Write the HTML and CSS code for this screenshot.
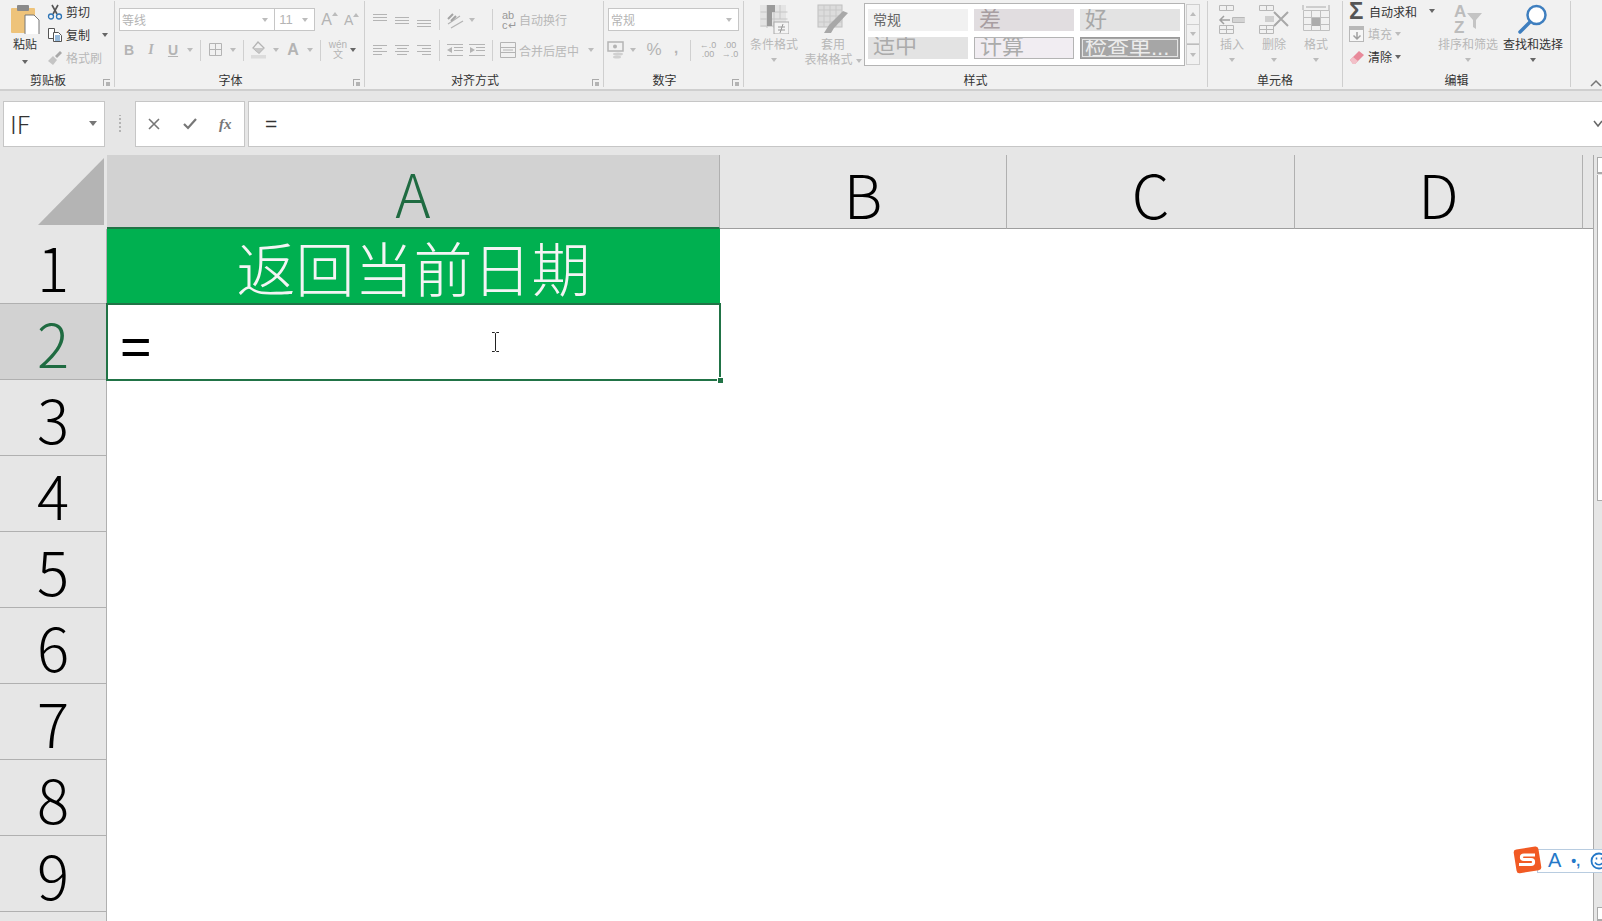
FILE: index.html
```html
<!DOCTYPE html>
<html lang="zh-CN">
<head>
    <meta charset="UTF-8">
    <title>Excel</title>
    <link rel="stylesheet" href="styles.css">
</head>
<body>
<div class="ribbon">
    <!-- clipboard -->
    <div class="group g-clip has-launcher">
        <div class="group-body flex">
            <div class="paste">
                <svg width="30" height="30" viewBox="0 0 30 30"><rect x="1" y="4" width="24" height="25" rx="1" fill="#eec37a"/><rect x="7" y="1" width="12" height="6" rx="1" fill="#8a8a8a"/><path d="M15 11h9l5 5v15H15z" fill="#fff" stroke="#777"/></svg>
                <span class="dark">粘贴</span>
                <i class="caret dk"></i>
            </div>
            <div class="clip-col">
                <div class="clip-row"><svg width="16" height="16" viewBox="0 0 16 16"><path d="M5 1l5 9M11 1L6 10" stroke="#555" stroke-width="1.6"/><circle cx="4" cy="12.5" r="2.5" fill="none" stroke="#2e75b6" stroke-width="1.3"/><circle cx="12" cy="12.5" r="2.5" fill="none" stroke="#2e75b6" stroke-width="1.3"/></svg><span class="dark">剪切</span></div>
                <div class="clip-row"><svg width="16" height="16" viewBox="0 0 16 16"><path d="M1.500 1.500h6v10h-6z" fill="#fff" stroke="#555"/><path d="M6.500 5.500h5l3 3v6h-8z" fill="#fff" stroke="#555"/><path d="M8 9h5M8 11h5M8 13h5" stroke="#2e75b6"/></svg><span class="dark">复制</span><i class="caret dk copy-caret"></i></div>
                <div class="clip-row"><svg width="16" height="16" viewBox="0 0 16 16"><path d="M1 11l5-5 4 4-4 5z" fill="#c4c4c4"/><path d="M8 6l5-5 2 2-5 5z" fill="#a8a8a8"/></svg><span class="off">格式刷</span></div>
            </div>
        </div>
        <div class="group-label">剪贴板</div>
        <i class="launcher"></i>
    </div>

    <!-- font -->
    <div class="group g-font has-launcher">
        <div class="group-body">
            <div class="top-row">
                <div class="select w-font"><span>等线</span><i class="caret"></i></div>
                <div class="select w-size"><span class="num">11</span><i class="caret"></i></div>
                <span class="grow-a big">A<i class="caret up"></i></span>
                <span class="grow-a small">A<i class="caret up"></i></span>
            </div>
            <div class="bottom-row">
                <span class="tool w22 fmt b">B</span>
                <span class="tool w22 fmt it">I</span>
                <span class="tool w22 fmt u">U</span>
                <span class="tool w12"><i class="caret"></i></span>
                <i class="sep"></i>
                <span class="tool w22"><svg width="16" height="16" viewBox="0 0 16 16"><path d="M1.500 1.500h12v12h-12zM7.500 1.500v12M1.500 7.500h12" fill="none" stroke="#b4b4b4"/></svg></span>
                <span class="tool w12"><i class="caret"></i></span>
                <i class="sep"></i>
                <span class="tool w22"><svg width="18" height="18" viewBox="0 0 18 18"><path d="M8 1l6 6-5 5-6-5z" fill="none" stroke="#b4b4b4" stroke-width="1.300"/><path d="M3 7h11l-5 5z" fill="#c8c8c8"/><rect x="1" y="14" width="15" height="3.500" fill="#dcdcdc"/></svg></span>
                <span class="tool w12"><i class="caret"></i></span>
                <span class="tool w22 fmt font-a">A</span>
                <span class="tool w12"><i class="caret"></i></span>
                <i class="sep"></i>
                <span class="tool wen"><small>wén</small><small>文</small></span>
                <span class="tool w12"><i class="caret dk"></i></span>
            </div>
        </div>
        <div class="group-label">字体</div>
        <i class="launcher"></i>
    </div>

    <!-- alignment -->
    <div class="group g-align has-launcher">
        <div class="group-body">
            <div class="top-row">
                <span class="tool w22"><svg width="14" height="14" viewBox="0 0 14 14"><path d="M0 1.500h14M0 4.500h14M0 7.500h14" stroke="#b4b4b4"/></svg></span>
                <span class="tool w22"><svg width="14" height="14" viewBox="0 0 14 14"><path d="M0 4.500h14M0 7.500h14M0 10.500h14" stroke="#b4b4b4"/></svg></span>
                <span class="tool w22"><svg width="14" height="14" viewBox="0 0 14 14"><path d="M0 7.500h14M0 10.500h14M0 13.500h14" stroke="#b4b4b4"/></svg></span>
                <i class="sep"></i>
                <span class="tool w22"><svg width="18" height="18" viewBox="0 0 18 18"><path d="M2 13L14 5M5 17l12-7" stroke="#b4b4b4" stroke-width="1.300"/><path d="M2 8l5-5M5 10l5-5" stroke="#a4a4a4" stroke-width="2"/></svg></span>
                <span class="tool w12"><i class="caret"></i></span>
                <i class="sep sep-wrap"></i>
                <span class="tool wrap-ico">ab<br>c↵</span>
                <span class="off">自动换行</span>
            </div>
            <div class="bottom-row">
                <span class="tool w22"><svg width="14" height="14" viewBox="0 0 14 14"><path d="M0 2.500h14M0 5.500h9M0 8.500h14M0 11.500h9" stroke="#b4b4b4"/></svg></span>
                <span class="tool w22"><svg width="14" height="14" viewBox="0 0 14 14"><path d="M0 2.500h14M2 5.500h10M0 8.500h14M2 11.500h10" stroke="#b4b4b4"/></svg></span>
                <span class="tool w22"><svg width="14" height="14" viewBox="0 0 14 14"><path d="M0 2.500h14M5 5.500h9M0 8.500h14M5 11.500h9" stroke="#b4b4b4"/></svg></span>
                <i class="sep"></i>
                <span class="tool w22"><svg width="16" height="14" viewBox="0 0 16 14"><path d="M0 1.500h16M7 4.500h9M7 7.500h9M0 12.500h16" stroke="#b4b4b4"/><path d="M5 4L0 7l5 3z" fill="#b4b4b4"/></svg></span>
                <span class="tool w22"><svg width="16" height="14" viewBox="0 0 16 14"><path d="M0 1.500h16M7 4.500h9M7 7.500h9M0 12.500h16" stroke="#b4b4b4"/><path d="M1 4l5 3-5 3z" fill="#b4b4b4"/></svg></span>
                <i class="sep sep-merge"></i>
                <span class="tool merge-ico"><svg width="16" height="16" viewBox="0 0 16 16"><path d="M.5.500h15v15H.5zM.5 5.500h15M.5 10.500h15M3 8h10" fill="none" stroke="#b4b4b4"/></svg></span>
                <span class="off nowrap">合并后居中</span>
                <i class="caret merge-caret"></i>
            </div>
        </div>
        <div class="group-label">对齐方式</div>
        <i class="launcher"></i>
    </div>

    <!-- number -->
    <div class="group g-num has-launcher">
        <div class="group-body">
            <div class="top-row">
                <div class="select w-num"><span>常规</span><i class="caret"></i></div>
            </div>
            <div class="bottom-row">
                <span class="tool w22"><svg width="18" height="18" viewBox="0 0 18 18"><rect x="1" y="1" width="15" height="9" fill="none" stroke="#b4b4b4" stroke-width="1.500"/><circle cx="8" cy="5.500" r="2" fill="#b4b4b4"/><ellipse cx="11" cy="13" rx="5" ry="1.500" fill="#d0d0d0"/><ellipse cx="10" cy="16" rx="4" ry="1.500" fill="#d0d0d0"/></svg></span>
                <span class="tool w12"><i class="caret"></i></span>
                <span class="tool pct">%</span>
                <span class="tool comma">,</span>
                <i class="sep sep-num"></i>
                <span class="tool dec">←.0<br>.00</span>
                <span class="tool dec">.00<br>→.0</span>
            </div>
        </div>
        <div class="group-label">数字</div>
        <i class="launcher"></i>
    </div>

    <!-- styles -->
    <div class="group g-style">
        <div class="group-body flex">
            <div class="big-btn w-cond">
                <svg width="30" height="30" viewBox="0 0 30 30"><path d="M1 1h26v22H1z" fill="#e4e4e4"/><path d="M1.500 8h27M1.500 15h27M1.500 22h16M8 1v23M15 1v23M21 1v14" stroke="#c6c6c6"/><path d="M8 1h8v7h-3v14H8z" fill="#9a9a9a"/><rect x="15" y="18" width="15" height="12" fill="#f4f4f4" stroke="#aaa"/><path d="M19 23h7M19 26h7M24 20l-3 9" stroke="#999"/></svg>
                <span class="off">条件格式</span>
                <i class="caret"></i>
            </div>
            <div class="big-btn w-table">
                <svg width="32" height="30" viewBox="0 0 32 30"><rect x="1" y="1" width="24" height="22" fill="#dcdcdc" stroke="#c0c0c0"/><path d="M1 6h24M1 12h24M1 18h24M7 1v22M13 1v22M19 1v22" stroke="#c8c8c8"/><path d="M31 9L17 24l-3 5h-7l5-8 14-14z" fill="#a8a8a8"/></svg>
                <span class="off">套用</span>
                <span class="off tbl-line">表格格式<i class="caret"></i></span>
            </div>
            <div class="gallery">
                <div class="style-cells">
                    <div class="style-cell s-normal">常规</div>
                    <div class="style-cell s-bad">差</div>
                    <div class="style-cell s-good">好</div>
                    <div class="style-cell s-mid">适中</div>
                    <div class="style-cell s-calc">计算</div>
                    <div class="style-cell s-check">检查单...</div>
                </div>
            </div>
            <div class="gal-scroll">
                <span><i class="caret up"></i></span>
                <span><i class="caret"></i></span>
                <span class="gal-more"><i class="caret"></i></span>
            </div>
        </div>
        <div class="group-label">样式</div>
    </div>

    <!-- cells -->
    <div class="group g-cells">
        <div class="group-body flex">
            <div class="big-btn w-cell">
                <svg width="28" height="30" viewBox="0 0 28 30"><path d="M1.500 1.500h14v5h-14zM8.500 1.500v5M14.500 13.500h12v5h-12zM20.500 13.500v5M1.500 21.500h14v8h-14zM8.500 21.500v8M1.500 25.500h14" fill="none" stroke="#b8b8b8"/><rect x="15" y="14" width="12" height="4" fill="#d4d4d4"/><path d="M12 16H2M6 12l-4 4 4 4" fill="none" stroke="#a0a0a0" stroke-width="1.500"/></svg>
                <span class="off">插入</span>
                <i class="caret"></i>
            </div>
            <div class="big-btn w-cell">
                <svg width="32" height="30" viewBox="0 0 32 30"><path d="M1.500 1.500h14v5h-14zM8.500 1.500v5M1.500 21.500h14v8h-14zM8.500 21.500v8M1.500 25.500h14" fill="none" stroke="#b8b8b8"/><rect x="7" y="12" width="9" height="6" fill="#cfcfcf"/><path d="M16 8l14 14M30 8L16 22" stroke="#a8a8a8" stroke-width="2"/></svg>
                <span class="off">删除</span>
                <i class="caret"></i>
            </div>
            <div class="big-btn w-cell">
                <svg width="28" height="30" viewBox="0 0 28 30"><path d="M1.500 6.500h26v20h-26zM1.500 13.500h26M1.500 20.500h26M9.500 6.500v20M18.500 6.500v20" fill="none" stroke="#c0c0c0"/><rect x="10" y="14" width="8" height="8" fill="#acacac"/><path d="M1 1v5M27 1v5M4 3h20" stroke="#aaa"/></svg>
                <span class="off">格式</span>
                <i class="caret"></i>
            </div>
        </div>
        <div class="group-label">单元格</div>
    </div>

    <!-- editing -->
    <div class="group g-edit">
        <div class="group-body flex">
            <div class="edit-col">
                <div class="clip-row"><span class="sigma">Σ</span><span class="dark">自动求和</span><i class="caret dk sum-caret"></i></div>
                <div class="clip-row"><svg width="16" height="16" viewBox="0 0 16 16"><rect x=".5" y=".5" width="14" height="15" fill="#f6f6f6" stroke="#b8b8b8"/><rect x="1" y="1" width="13" height="3" fill="#b8b8b8"/><path d="M8 6v7M4.500 9.500L8 13l3.500-3.500" fill="none" stroke="#a0a0a0" stroke-width="1.500"/></svg><span class="off">填充</span><i class="caret"></i></div>
                <div class="clip-row"><svg width="16" height="16" viewBox="0 0 16 16"><path d="M1 11l9-9 5 4-9 9H4z" fill="#e88a9a"/><path d="M1 11l3-3 5 4-3 3H4z" fill="#f2c0c8"/></svg><span class="dark">清除</span><i class="caret dk"></i></div>
            </div>
            <div class="big-btn w-sort">
                <svg width="32" height="30" viewBox="0 0 32 30"><text x="2" y="13" class="az">A</text><text x="2" y="29" class="az">Z</text><path d="M15 9h15l-6 7v9l-3-2v-7z" fill="#c4c4c4"/></svg>
                <span class="off">排序和筛选</span>
                <i class="caret"></i>
            </div>
            <div class="big-btn w-find">
                <svg width="30" height="30" viewBox="0 0 30 30"><circle cx="18.500" cy="11" r="9" fill="#fff" stroke="#3f7fbf" stroke-width="2.500"/><path d="M12 18L2 28" stroke="#3f7fbf" stroke-width="3.500" stroke-linecap="round"/></svg>
                <span class="dark">查找和选择</span>
                <i class="caret dk"></i>
            </div>
        </div>
        <div class="group-label">编辑</div>
    </div>
    <svg class="collapse" width="12" height="8" viewBox="0 0 12 8"><path d="M1 7l5-5 5 5" fill="none" stroke="#777" stroke-width="1.500"/></svg>
</div>

<div class="formula-bar">
    <div class="name-box"><span>IF</span><i class="caret dk"></i></div>
    <div class="grip"></div>
    <div class="fx-buttons">
        <svg width="14" height="14" viewBox="0 0 14 14"><path d="M2 2l10 10M12 2L2 12" stroke="#777" stroke-width="1.600"/></svg>
        <svg width="16" height="14" viewBox="0 0 16 14"><path d="M2 7l4 4 8-9" fill="none" stroke="#777" stroke-width="2.200"/></svg>
        <span class="fx">fx</span>
    </div>
    <div class="formula-input"><span>=</span><svg class="fb-expand" width="10" height="8" viewBox="0 0 10 8"><path d="M1 1l4 5 4-5" fill="none" stroke="#666" stroke-width="1.500"/></svg></div>
</div>

<div class="sheet">
    <div class="grid">
        <div class="corner"><div class="tri"></div></div>
        <div class="col-head selected">A</div>
        <div class="col-head">B</div>
        <div class="col-head">C</div>
        <div class="col-head last">D</div>
        <div class="col-rest"></div>

        <div class="row-head">1</div>
        <div class="cell title-cell">返回当前日期</div>
        <div class="row-head selected">2</div>
        <div class="cell active-cell"><span class="eq">=</span>
            <svg class="ibeam" width="9" height="20" viewBox="0 0 9 20"><path d="M1 .5h2.500l1 1 1-1H8M4.500 1.500v17M1 19.500h2.500l1-1 1 1H8" fill="none" stroke="#222"/></svg>
            <i class="handle"></i>
        </div>
        <div class="row-head">3</div><div class="cell"></div>
        <div class="row-head">4</div><div class="cell"></div>
        <div class="row-head">5</div><div class="cell"></div>
        <div class="row-head">6</div><div class="cell"></div>
        <div class="row-head">7</div><div class="cell"></div>
        <div class="row-head">8</div><div class="cell"></div>
        <div class="row-head">9</div><div class="cell"></div>
        <div class="row-head">10</div><div class="cell"></div>
    </div>
    <div class="vscroll">
        <div class="arrow"></div>
        <div class="thumb"></div>
        <div class="arrow down"></div>
    </div>
</div>

<div class="ime">
    <svg class="ime-logo" width="30" height="29" viewBox="0 0 30 29"><rect x="2" y="2" width="25" height="24" rx="3" fill="#f15a24" transform="rotate(-9 14 14)"/><path d="M22 9H11c-3.500 0-3.500 4.500 0 4.500h7c3.500 0 3.500 5 0 5H6" fill="none" stroke="#fff" stroke-width="3"/></svg>
    <div class="ime-bar">
        <span class="ime-a">A</span>
        <span class="ime-dots">•,</span>
        <svg width="18" height="18" viewBox="0 0 18 18"><circle cx="9" cy="9" r="7.500" fill="none" stroke="#2478c8" stroke-width="1.800"/><path d="M5 10.500c2 3 6 3 8 0" fill="none" stroke="#2478c8" stroke-width="1.500"/><path d="M6.500 5.500v2M11.500 5.500v2" stroke="#2478c8" stroke-width="1.500"/></svg>
    </div>
</div>
</body>
</html>
```

FILE: styles.css
```css
* {
    margin: 0;
    padding: 0;
    box-sizing: border-box;
}
html, body {
    width: 1602px;
    height: 921px;
    overflow: hidden;
}
body {
    position: relative;
    background: #e6e6e6;
    font-family: "Liberation Sans", "Noto Sans CJK SC", sans-serif;
    font-size: 12px;
    color: #444;
    display: flex;
    flex-direction: column;
}
.flex {
    display: flex;
}
.dark {
    color: #333;
}
.off {
    color: #b8b8b8;
}
.nowrap {
    white-space: nowrap;
}
svg {
    display: block;
    flex-shrink: 0;
}

/* little triangles */
.caret {
    display: inline-block;
    width: 0;
    height: 0;
    border-left: 3.5px solid transparent;
    border-right: 3.5px solid transparent;
    border-top: 4px solid #bcbcbc;
    flex-shrink: 0;
}
.caret.dk {
    border-top-color: #666;
}
.caret.up {
    border-top: 0;
    border-bottom: 4px solid #bcbcbc;
}

/* ribbon */
.ribbon {
    position: relative;
    display: flex;
    height: 91px;
    flex-shrink: 0;
    background: #f1f1f1;
    border-bottom: 2px solid #cfcfcf;
}
.group {
    position: relative;
    display: flex;
    flex-direction: column;
    height: 86px;
    margin-top: 1px;
    border-right: 1px solid #cfcfcf;
}
.group-body {
    flex: 1;
    min-height: 0;
}
.group-label {
    height: 16px;
    line-height: 21px;
    text-align: center;
    color: #333;
}
.has-launcher .group-label {
    padding-right: 18px;
}
.launcher {
    position: absolute;
    right: 4px;
    bottom: 1px;
    width: 7px;
    height: 7px;
    border-left: 1px solid #aaa;
    border-top: 1px solid #aaa;
}
.launcher::after {
    content: "";
    position: absolute;
    right: 0;
    bottom: 0;
    width: 4px;
    height: 4px;
    background: #b4b4b4;
}
.g-clip { width: 115px; }
.g-font { width: 250px; }
.g-align { width: 239px; }
.g-num { width: 140px; }
.g-style { width: 464px; }
.g-cells { width: 135px; }
.g-edit { width: 228px; }

.paste {
    width: 30px;
    margin: 3px 0 0 10px;
    display: flex;
    flex-direction: column;
    align-items: center;
}
.paste span {
    margin-top: 2px;
    line-height: 18px;
}
.paste .caret {
    margin-top: 6px;
}
.clip-col {
    margin-left: 7px;
    margin-top: -1px;
    width: 66px;
}
.clip-row {
    display: flex;
    align-items: center;
    height: 23px;
    gap: 3px;
    white-space: nowrap;
}
.copy-caret {
    margin-left: 9px;
}

.top-row, .bottom-row {
    display: flex;
    align-items: center;
}
.top-row {
    height: 23px;
    margin-top: 7px;
}
.bottom-row {
    height: 22px;
    margin-top: 8px;
}
.g-font .top-row { padding-left: 4px; }
.g-font .bottom-row { padding-left: 3px; }
.g-align .top-row, .g-align .bottom-row { margin-left: 4px; }
.g-num .top-row { padding-left: 4px; }
.g-num .bottom-row { padding-left: 1px; }

.select {
    display: flex;
    align-items: center;
    justify-content: space-between;
    height: 23px;
    padding: 0 6px 0 2px;
    background: #fff;
    border: 1px solid #c6c6c6;
    color: #b4b4b4;
}
.w-font { width: 157px; }
.w-size { width: 40px; border-left: 0; padding-left: 4px; }
.w-num { width: 131px; }
.num {
    font-size: 13px;
}
.grow-a {
    display: flex;
    color: #b4b4b4;
    font-size: 16px;
    width: 20px;
}
.grow-a.big { margin-left: 6px; }
.grow-a.small { margin-left: 3px; font-size: 14px; }
.grow-a .caret { margin-top: 1px; border-left-width: 3px; border-right-width: 3px; }

.tool {
    display: flex;
    align-items: center;
    justify-content: center;
    flex-shrink: 0;
    color: #b4b4b4;
}
.w22 { width: 22px; }
.w12 { width: 12px; }
.fmt {
    font-size: 14px;
}
.b { font-weight: bold; }
.it { font-style: italic; font-family: "Liberation Serif", serif; font-weight: bold; }
.u { text-decoration: underline; font-weight: bold; }
.font-a { font-size: 16px; font-weight: bold; }
.sep {
    width: 1px;
    height: 21px;
    margin: 0 4px;
    background: #d0d0d0;
    flex-shrink: 0;
}
.sep-wrap { margin-left: 14px; margin-right: 9px; }
.sep-merge { margin-left: 4px; margin-right: 7px; }
.wen {
    width: 26px;
    margin-right: -4px;
    flex-direction: column;
    line-height: 10px;
}
.wen small {
    font-size: 10px;
}
.wrap-ico {
    width: 15px;
    display: block;
    font-size: 11px;
    line-height: 10px;
    margin-right: 2px;
    color: #999;
}
.merge-ico {
    width: 16px;
    margin-right: 3px;
}
.merge-caret {
    margin-left: 9px;
}
.pct {
    width: 26px;
    margin-left: 2px;
    font-size: 17px;
}
.comma {
    width: 18px;
    font-size: 15px;
    font-weight: bold;
    padding-bottom: 6px;
}
.sep-num { margin-left: 5px; margin-right: 6px; }
.dec {
    display: block;
    width: 22px;
    font-size: 9px;
    line-height: 9px;
    text-align: center;
    color: #aaa;
}

.big-btn {
    display: flex;
    flex-direction: column;
    align-items: center;
    flex-shrink: 0;
    padding-top: 3px;
    white-space: nowrap;
}
.big-btn span {
    line-height: 15px;
}
.big-btn > svg {
    margin-bottom: 4px;
}
.big-btn > .caret {
    margin-top: 5px;
}
.w-cond { width: 56px; margin-left: 2px; }
.w-table { width: 62px; }
.tbl-line .caret { margin-left: 3px; vertical-align: middle; }
.gallery {
    width: 321px;
    height: 63px;
    margin-top: 2px;
    padding: 5px 3px 0 3px;
    background: #fff;
    border: 1px solid #b4b4b4;
}
.style-cells {
    display: grid;
    grid-template-columns: repeat(3, 100px);
    grid-auto-rows: 22px;
    column-gap: 6px;
    row-gap: 6px;
}
.style-cell {
    overflow: hidden;
    line-height: 22px;
    font-size: 22px;
    padding-left: 5px;
    white-space: nowrap;
    color: #ababab;
}
.s-normal { background: #f1f1f1; font-size: 14px; color: #666; }
.s-bad { background: #e1dde0; color: #a89ea2; }
.s-good { background: #e3e3e3; color: #a8a8a8; }
.s-mid { background: #e3e3e3; line-height: 18px; }
.s-calc { background: #f1edf2; border: 1px solid #b4b4b4; line-height: 18px; }
.s-check {
    background: #a6a6a6;
    border: 3px double #e4e4e4;
    outline: 1px solid #9a9a9a;
    outline-offset: -1px;
    padding-left: 2px;
    color: #ececec;
    line-height: 15px;
}
.gal-scroll {
    display: flex;
    flex-direction: column;
    width: 14px;
    height: 61px;
    margin: 3px 0 0 1px;
    border: 1px solid #cfcfcf;
}
.gal-scroll span {
    flex: 1;
    display: flex;
    align-items: center;
    justify-content: center;
    border-bottom: 1px solid #cfcfcf;
}
.gal-scroll span:last-child {
    border-bottom: 0;
}
.gal-more {
    border-top: 1px solid #bcbcbc;
}
.w-cell { width: 42px; }
.g-cells .group-body { padding-left: 3px; }
.edit-col {
    width: 93px;
    margin-left: 6px;
    margin-top: -1px;
}
.edit-col .clip-row:first-child {
    height: 22px;
}
.edit-col .clip-row:nth-child(2) .caret,
.edit-col .clip-row:nth-child(3) .caret {
    border-left-width: 3px;
    border-right-width: 3px;
}
.sigma {
    width: 17px;
    font-size: 24px;
    line-height: 18px;
    font-weight: bold;
    color: #555;
}
.sum-caret {
    margin-left: 9px;
}
.w-sort { width: 60px; margin-left: -4px; }
.w-find { width: 60px; margin-left: 5px; }
.az {
    font-size: 17px;
    font-weight: bold;
    fill: #bcbcbc;
    font-family: "Liberation Sans", sans-serif;
}
.collapse {
    position: absolute;
    right: 0;
    bottom: 2px;
}

/* formula bar */
.formula-bar {
    display: flex;
    align-items: stretch;
    height: 64px;
    flex-shrink: 0;
    padding: 10px 0 8px 3px;
    background: #e6e6e6;
}
.name-box {
    display: flex;
    align-items: center;
    justify-content: space-between;
    width: 102px;
    padding: 0 7px 2px 6px;
    background: #fff;
    border: 1px solid #c6c6c6;
    font-size: 25px;
    font-family: "Noto Sans CJK SC", sans-serif;
    font-weight: 300;
    color: #333;
}
.name-box .caret {
    border-left-width: 4px;
    border-right-width: 4px;
    border-top-width: 5px;
    border-top-color: #777;
}
.grip {
    width: 30px;
    background-image: linear-gradient(#b4b4b4 50%, transparent 50%);
    background-size: 2px 4px;
    background-position: center;
    background-repeat: repeat-y;
    margin: 14px 0;
}
.fx-buttons {
    display: flex;
    align-items: center;
    gap: 21px;
    width: 110px;
    padding-left: 11px;
    background: #fff;
    border: 1px solid #c6c6c6;
}
.fx {
    font-family: "Liberation Serif", serif;
    font-style: italic;
    font-weight: bold;
    font-size: 15px;
    color: #777;
}
.formula-input {
    display: flex;
    align-items: center;
    justify-content: space-between;
    flex: 1;
    margin-left: 3px;
    padding-left: 16px;
    background: #fff;
    border: 1px solid #c6c6c6;
    border-right: 0;
    font-size: 21px;
    color: #333;
}
.fb-expand {
    margin-right: -1px;
}

/* sheet */
.sheet {
    display: flex;
    flex: 1;
    min-height: 0;
    overflow: hidden;
}
.grid {
    display: grid;
    grid-template-columns: 107px 613px 287px 288px 288px 10px;
    grid-template-rows: 74px 75px;
    grid-auto-rows: 76px;
    width: 1593px;
    background: #fff;
    align-content: start;
}
.corner {
    background: #e6e6e6;
    padding: 3px 3px 4px 38px;
}
.tri {
    width: 100%;
    height: 100%;
    background: #b4b4b4;
    clip-path: polygon(100% 0, 100% 100%, 0 100%);
}
.col-head, .row-head {
    display: flex;
    align-items: center;
    justify-content: center;
    background: #e6e6e6;
    border-right: 1px solid #b0b0b0;
    font-family: "Noto Sans CJK SC", sans-serif;
    font-weight: 300;
    font-size: 60px;
    color: #000;
    line-height: 1;
}
.col-head {
    border-bottom: 1px solid #9e9e9e;
    padding-top: 2px;
}
.col-head.selected {
    background: #d2d2d2;
    color: #1f6b41;
    border-bottom: 2px solid #217346;
}
.col-rest {
    background: #e6e6e6;
    border-bottom: 1px solid #9e9e9e;
}
.row-head {
    grid-column: 1;
    border-bottom: 1px solid #b0b0b0;
}
.row-head.selected {
    background: #d2d2d2;
    color: #1f6b41;
}
.cell {
    grid-column: 2;
}
.title-cell {
    display: flex;
    align-items: center;
    justify-content: center;
    background: #00b050;
    color: #f4f4f4;
    font-family: "Noto Sans CJK SC", sans-serif;
    font-weight: 300;
    font-size: 59px;
    line-height: 1;
}
.active-cell {
    position: relative;
    outline: 2px solid #217346;
    outline-offset: -1px;
    padding-left: 13px;
}
.eq {
    display: block;
    width: 30px;
    font-family: "Liberation Sans", sans-serif;
    font-size: 54px;
    line-height: 84px;
    color: #000;
}
.ibeam {
    position: absolute;
    left: 384px;
    top: 28px;
}
.handle {
    position: absolute;
    right: -3px;
    bottom: -3px;
    width: 6px;
    height: 6px;
    background: #217346;
    border: 1px solid #fff;
    border-right: 0;
    border-bottom: 0;
}
.vscroll {
    display: flex;
    flex-direction: column;
    width: 9px;
    background: #e6e6e6;
    border-left: 1px solid #aaa;
    padding-left: 3px;
}
.arrow {
    height: 17px;
    margin-top: 2px;
    background: #fff;
    border: 1px solid #aaa;
    border-right: 0;
    border-bottom-width: 2px;
}
.arrow.down {
    margin-top: auto;
    height: 14px;
}
.thumb {
    height: 326px;
    margin-top: 1px;
    background: #fff;
    border-left: 1px solid #aaa;
    border-bottom: 1px solid #aaa;
}

/* input method toolbar */
.ime {
    position: absolute;
    left: 1513px;
    top: 846px;
    display: flex;
    align-items: center;
}
.ime-logo {
    position: relative;
    z-index: 1;
}
.ime-bar {
    display: flex;
    align-items: center;
    gap: 10px;
    width: 66px;
    height: 24px;
    margin-left: -6px;
    padding-left: 10px;
    background: #fff;
    border: 1px solid #b8cce0;
    border-right: 0;
}
.ime-a {
    font-size: 20px;
    color: #2478c8;
}
.ime-dots {
    font-size: 14px;
    font-weight: bold;
    color: #2478c8;
}
```
